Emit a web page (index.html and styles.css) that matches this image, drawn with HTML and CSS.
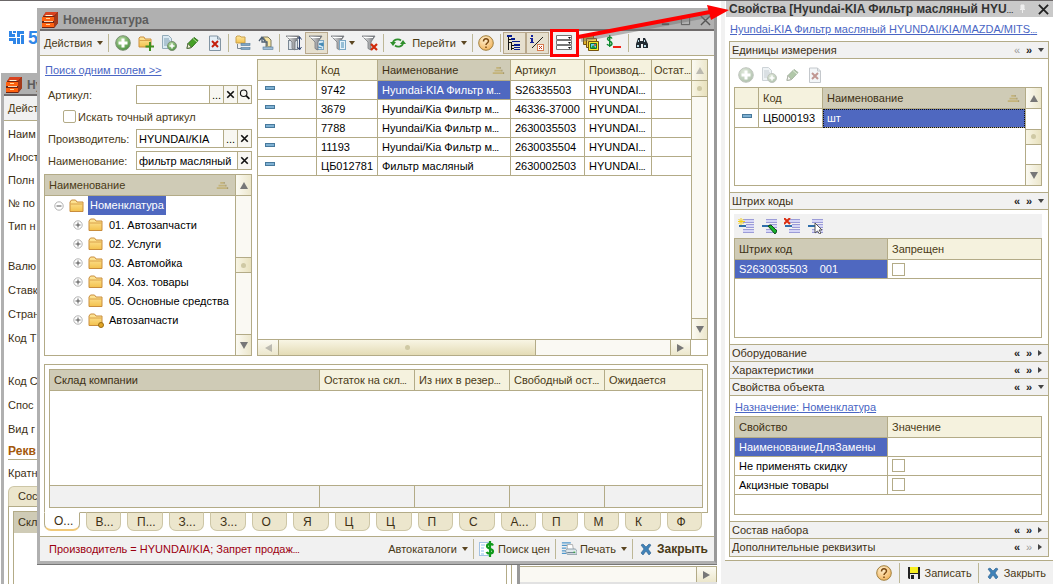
FILE: index.html
```html
<!DOCTYPE html>
<html lang="ru">
<head>
<meta charset="utf-8">
<title>Номенклатура</title>
<link rel="stylesheet" href="styles.css">
</head>
<body>
<svg class="defs" aria-hidden="true">
  <defs>
    <linearGradient id="steel" x1="0" y1="0" x2="1" y2="0"><stop offset="0" stop-color="#f4f4f4"/><stop offset="1" stop-color="#6c6f74"/></linearGradient>
    <linearGradient id="fold" x1="0" y1="0" x2="0" y2="1"><stop offset="0" stop-color="#ffe9a0"/><stop offset="1" stop-color="#f3c14d"/></linearGradient>
    <radialGradient id="green" cx=".4" cy=".3" r=".8"><stop offset="0" stop-color="#b9dba4"/><stop offset="1" stop-color="#3f8a35"/></radialGradient>
    <radialGradient id="amber" cx=".4" cy=".3" r=".8"><stop offset="0" stop-color="#fff0cf"/><stop offset="1" stop-color="#f0ad50"/></radialGradient>
    <symbol id="cabinet" viewBox="0 0 16 16"><path d="M4 0h12v11l-4 5H0V6z" fill="#6d2413"/><path d="M4 0h12l-4 4H1z" fill="#d9431f"/><path d="M12 5l4-5v11l-4 5z" fill="#a33a1b"/><path d="M0 5h12v4H0zM0 11h12v4H0z" fill="#ff6210"/><path d="M4 3h7l-1 1H3z" fill="#fff3d8"/><path d="M2 9h9v1H2z" fill="#f3d6b8"/><path d="M4 6h4v1H4zM4 12h4v1H4z" fill="#ffd9a0"/></symbol>
    <symbol id="plus" viewBox="0 0 16 16"><circle cx="8" cy="8" r="7.3" fill="url(#green)" stroke="#7b8f74"/><path d="M6.500 3.500h3v3h3v3h-3v3h-3v-3h-3v-3h3z" fill="#fff"/></symbol>
    <symbol id="folder" viewBox="0 0 16 16"><path d="M1 13V4l1.500-2h4L8 4h6v9.500H1z" fill="url(#fold)" stroke="#c98d3c"/><path d="M1.500 6h12" stroke="#d9a24a"/></symbol>
    <symbol id="folderplus" viewBox="0 0 16 16"><path d="M1 12V3l1-1h4l1 2h6v8z" fill="url(#fold)" stroke="#c98d3c"/><path d="M1.500 5.500h11" stroke="#d9a24a"/><path d="M12 7v9M7.500 11.500h8.500" stroke="#3f8f1f" stroke-width="2"/></symbol>
    <symbol id="docplus" viewBox="0 0 16 16"><path d="M1.500 .5h6l3 3v10h-9z" fill="#dbeaf3" stroke="#93abb9"/><path d="M3 4h5M3 6h6M3 8h5M3 10h3" stroke="#7f9fb2"/><circle cx="11" cy="11" r="4.500" fill="url(#green)" stroke="#7b8f74"/><path d="M11 8.500v5M8.500 11h5" stroke="#fff" stroke-width="1.500"/></symbol>
    <symbol id="pencil" viewBox="0 0 16 16"><path d="M3 13.500l1-5 6-6 4 3-6.500 7z" fill="#46a126" stroke="#2e6f1a"/><path d="M9 3.500l4 3.500" stroke="#b5dba0"/><path d="M3 13.500l1-5 3.500 4z" fill="#eef3d9" stroke="#5a6d45"/></symbol>
    <symbol id="docdel" viewBox="0 0 16 16"><path d="M2.500 1h8l3 3v11.500h-11z" fill="#e4eff7" stroke="#8294a3"/><path d="M10.500 1v3h3" fill="none" stroke="#8294a3"/><path d="M5 6l6 6M11 6l-6 6" stroke="#c4200d" stroke-width="2"/></symbol>
    <symbol id="move" viewBox="0 0 16 16"><path d="M1 8V2l1-1h3l1 1h4v6z" fill="url(#fold)" stroke="#c9a04c"/><path d="M2.500 9v4.500h4" fill="none" stroke="#7a8790"/><rect x="6" y="8.500" width="9" height="2" fill="#7fa6c6" stroke="#547a98" stroke-width=".6"/><rect x="6" y="12.500" width="9" height="2" fill="#7fa6c6" stroke="#547a98" stroke-width=".6"/></symbol>
    <symbol id="up" viewBox="0 0 16 16"><path d="M5 2h5l3 3v7H8V6z" fill="#f6e3a0" stroke="#7d7a62"/><path d="M1 6l3-4 3 4M4 3v4h5v4" fill="none" stroke="#4e5f71" stroke-width="1.300"/><rect x="5" y="12" width="10" height="2.500" fill="#9fbdd6" stroke="#547a98" stroke-width=".6"/></symbol>
    <symbol id="funnel" viewBox="0 0 16 16"><path d="M0 1h13L9 7v8l-3-1.500V7z" fill="url(#steel)" stroke="#74777b" stroke-width=".8"/><path d="M1.500 2.500h9.500" stroke="#fff"/></symbol>
    <symbol id="funnelsort" viewBox="0 0 16 16"><rect x="2.500" y="5.500" width="9" height="9" fill="#dce4ec" stroke="#7a8794"/><use href="#funnel"/><path d="M13.500 2v12M11.500 4.500l2-3 2 3M11.500 12l2 3 2-3" fill="none" stroke="#34476e"/></symbol>
    <symbol id="funnelcur" viewBox="0 0 16 16"><rect x="7.500" y="5.500" width="7" height="9" fill="#d4e8f5" stroke="#7ba7c4"/><use href="#funnel"/><path d="M10 9l4-1v3zM9 12l4 1" fill="#4489b3" stroke="#4489b3"/></symbol>
    <symbol id="funnellist" viewBox="0 0 16 16"><use href="#funnel"/><rect x="8.500" y="5.500" width="6" height="9" fill="#e7f3fa" stroke="#7ba7c4"/><path d="M10 8h3M10 10h3M10 12h3" stroke="#4489b3"/></symbol>
    <symbol id="funneldel" viewBox="0 0 16 16"><use href="#funnel"/><path d="M9 9l6 6M15 9l-6 6" stroke="#d02a0a" stroke-width="2.200"/></symbol>
    <symbol id="refresh" viewBox="0 0 16 16"><path d="M3 8c0-3 5-5 8-2.500M13 8c0 3-5 5-8 2.500" fill="none" stroke="#2f8f2c" stroke-width="1.800"/><path d="M0 7h6l-3 4zM10 9h6l-3-4z" fill="#2f8f2c"/></symbol>
    <symbol id="help" viewBox="0 0 16 16"><circle cx="8" cy="8" r="7.300" fill="url(#amber)" stroke="#a1803f"/><path d="M5.500 6.500c0-3.500 5-3.500 5-.5 0 2-2.500 2-2.500 4M8 11.500v1.500" fill="none" stroke="#7b4a13" stroke-width="1.500"/></symbol>
    <symbol id="tree" viewBox="0 0 16 16"><path d="M1 0h5v2H1zM5 3h4v2H5zM6 6h8v1H6zM8 9h6v2H8zM8 12h6v1H8zM8 14h6v1H8z" fill="#071d8c"/><path d="M2.500 2v13M3 4.500h2M3 7.500h3M5.500 8v7M6 10.500h2M6 13.500h2" stroke="#111" fill="none"/></symbol>
    <symbol id="ix" viewBox="0 0 16 16"><path d="M2 0h2v2H2zM1 3h3v4h1v1H1V7h1V4H1z" fill="#15239a"/><path d="M3 13L14 2" stroke="#222"/><rect x="8.500" y="9.500" width="6" height="6" fill="#fff" stroke="#d77b50"/><path d="M10 11l3 3M13 11l-3 3" stroke="#c33a14"/></symbol>
    <symbol id="panel" viewBox="0 0 16 16"><path d="M.5.500h15v4H.5zM.5 5.500h15v4H.5zM.5 10.500h15v4H.5z" fill="#fff" stroke="#777"/><path d="M12 2h3l-1.500 2zM12 7h3l-1.500 2zM12 12h3l-1.500 2z" fill="#111"/></symbol>
    <symbol id="pictures" viewBox="0 0 16 16"><path d="M.5.500h10v9H.5z" fill="#e0b129" stroke="#75520e"/><path d="M3.500 3.500h10v9h-10z" fill="#f6d353" stroke="#75520e"/><path d="M5.500 6.500h10v9h-10z" fill="#f4ea28" stroke="#75520e"/><path d="M7.500 8.500h6v5h-6z" fill="#63d3ee" stroke="#176b37"/><path d="M8 13l2-3 3 3z" fill="#239a35"/><circle cx="12" cy="10" r="1" fill="#e1402a"/></symbol>
    <symbol id="dollar" viewBox="0 0 16 16"><path d="M6 3.500C5 1.500 1.500 2 1.500 4s4.500 2 4.500 4.500S2 11 1 9M3.700 0v12" fill="none" stroke="#0a8a2e" stroke-width="1.400"/><path d="M7 11h8v2H7z" fill="#f02318"/></symbol>
    <symbol id="binoc" viewBox="0 0 16 16"><path d="M4 3h2v3h3V3h2l3 6v4H9V9H7v4H2V9z" fill="#222b33"/><path d="M3 10h2v2H3zM10 10h2v2h-2zM4 5h1v2H4zM10 5h1v2h-1z" fill="#b9dce8"/></symbol>
    <symbol id="lens" viewBox="0 0 16 16"><circle cx="7" cy="6.500" r="4" fill="none" stroke="#111" stroke-width="1.400"/><path d="M10 9.500l4 4" stroke="#111" stroke-width="2.200"/></symbol>
    <symbol id="cross" viewBox="0 0 16 16"><path d="M4 4l8 8M12 4l-8 8" stroke="#111" stroke-width="2"/></symbol>
    <symbol id="sort" viewBox="0 0 16 10"><path d="M6 1h4v2H6zM4 4h8v2H4zM2 7h12v2H2z" fill="#c3b37a"/><path d="M10 1h1v2h-1zM12 4h1v2h-1zM14 7h1v2h-1z" fill="#9b8c5d"/></symbol>
    <symbol id="bluex" viewBox="0 0 16 16"><path d="M3 4l2-1 3 3 3-3 2 1-3 4 3 4-2 2-3-4-3 4-2-2 3-4z" fill="#3f82b8" stroke="#2b5e8d" stroke-width=".6"/></symbol>
    <symbol id="price" viewBox="0 0 16 16"><path d="M.5 1.500h11v13H.5z" fill="#fff" stroke="#4f8fd0" stroke-dasharray="1 1"/><path d="M2 4h4M2 7h3M2 10h3M2 13h3" stroke="#8ec1ea"/><path d="M14 4.500c-1-2.500-6-2-6 .8s6 2.200 6 5-5 3.200-6.500.7M11 0v16" fill="none" stroke="#109a1a" stroke-width="2.200"/></symbol>
    <symbol id="print" viewBox="0 0 18 16"><path d="M1 1h10M1 4h8M1 7h5M1 10h5M1 13h5" stroke="#4f97cc" stroke-width="1.400"/><path d="M7 3h6l1 6H7z" fill="#fff" stroke="#aaa"/><path d="M5 10l2-2h9l2 2v4H7z" fill="#dfe7ec" stroke="#8496a3"/><path d="M7 12h9" stroke="#5e7484"/><path d="M14 11h2v1h-2z" fill="#1bb51b"/></symbol>
    <symbol id="disk" viewBox="0 0 16 16"><path d="M2 2h12v12H3l-1-1z" fill="#222"/><path d="M4 2h8v6H4z" fill="#f8ef21"/><path d="M4 9h8v5H4z" fill="#eee"/><path d="M5 10h3v4H5z" fill="#222"/></symbol>
    <symbol id="lines" viewBox="0 0 16 16"><path d="M5 1h11v4H5zM8 6h8v4H8zM5 11h11v4H5z" fill="#9c9cd8"/><path d="M5 3h11M8 8h8M5 13h11" stroke="#e9e9ff" stroke-width="1.500"/><path d="M1 8h7" stroke="#2f6eaa" stroke-width="2"/></symbol>
    <symbol id="lnew" viewBox="0 0 16 16"><use href="#lines"/><path d="M3 0v7M0 3.500h7M.5 1l5 5M5.500 1l-5 5" stroke="#f2cf1d"/></symbol>
    <symbol id="ledit" viewBox="0 0 16 16"><use href="#lines"/><path d="M7 8l3-1 6 6-2 3z" fill="#16b32c" stroke="#114d14"/></symbol>
    <symbol id="ldel" viewBox="0 0 16 16"><use href="#lines"/><path d="M0 0l6 6M6 0L0 6" stroke="#db2d10" stroke-width="2"/></symbol>
    <symbol id="lpick" viewBox="0 0 16 16"><use href="#lines"/><path d="M8 5v10l2.500-2 2 3 1.500-1-2-3h3z" fill="#fff" stroke="#555"/></symbol>
    <symbol id="node" viewBox="0 0 10 10"><circle cx="5" cy="5" r="4.200" fill="#fff" stroke="#b3b3b3"/><path d="M2.500 5h5" stroke="#555"/></symbol>
    <symbol id="nodeplus" viewBox="0 0 10 10"><use href="#node"/><path d="M5 2.500v5" stroke="#555"/></symbol>
  </defs>
</svg>

<div class="screen">
  <main class="desktop">
    <svg class="logo" viewBox="0 0 15 13"><path d="M0 0h3v3h3v3H0zM4 0h3v2H4zM8 0h7v3h-4v3H8zM0 7h7v3H0zM4 10h3v3H4zM8 7h3v6H8zM12 4h3v9h-3z" fill="#2f86e8"/></svg>
    <span class="logo-text">5</span>

    <section class="back-right">
      <div class="hbar"><span class="track"></span><button class="sb right" aria-label="Вправо"></button></div>
    </section>
    <section class="win back">
      <header class="titlebar"><svg class="i"><use href="#cabinet"/></svg><h2>Hy</h2></header>
      <div class="toolbar"><button class="tb text">Дейст</button></div>
      <div class="back-body">
        <ul class="labels first"><li>Наим</li><li>Иност</li><li>Полн</li><li>№ по</li><li>Тип н</li></ul>
        <ul class="labels"><li>Валю</li><li>Ставк</li><li>Стран</li><li>Код Т</li></ul>
        <ul class="labels"><li>Код С</li><li>Спос</li><li>Вид г</li></ul>
        <h3>Рекв</h3>
        <p class="ratio">Кратн</p>
        <span class="back-tab">Сос</span>
        <div class="back-page"><div class="back-grid"><b>Скл</b></div></div>
      </div>
    </section>

    <section class="win front">
      <header class="titlebar"><svg class="i"><use href="#cabinet"/></svg><h1>Номенклатура</h1>
        <div class="winbtns"><button aria-label="Свернуть"><svg viewBox="0 0 12 12"><path d="M2 10h8" stroke="#444" stroke-width="2"/></svg></button><button aria-label="Развернуть"><svg viewBox="0 0 12 12"><path d="M1.500 1.500h9v9h-9z" fill="none" stroke="#555"/></svg></button><button aria-label="Закрыть окно"><svg viewBox="0 0 12 12"><path d="M1 1l10 10M11 1L1 11" stroke="#555" stroke-width="1.500"/></svg></button></div>
      </header>
      <div class="toolbar">
        <button class="tb text">Действия<i class="dd"></i></button><i class="sep"></i>
        <button class="tb" aria-label="Добавить"><svg class="i"><use href="#plus"/></svg></button>
        <button class="tb" aria-label="Новая группа"><svg class="i"><use href="#folderplus"/></svg></button>
        <button class="tb" aria-label="Скопировать"><svg class="i"><use href="#docplus"/></svg></button>
        <button class="tb" aria-label="Изменить"><svg class="i"><use href="#pencil"/></svg></button>
        <button class="tb" aria-label="Удалить"><svg class="i"><use href="#docdel"/></svg></button><i class="sep"></i>
        <button class="tb" aria-label="Переместить в группу"><svg class="i"><use href="#move"/></svg></button>
        <button class="tb" aria-label="На уровень вверх"><svg class="i"><use href="#up"/></svg></button><i class="sep"></i>
        <button class="tb" aria-label="Отбор и сортировка"><svg class="i"><use href="#funnelsort"/></svg></button>
        <button class="tb on" aria-label="Отбор по значению"><svg class="i"><use href="#funnelcur"/></svg></button>
        <button class="tb wide" aria-label="История отборов"><svg class="i"><use href="#funnellist"/></svg><i class="dd"></i></button>
        <button class="tb" aria-label="Отключить отбор"><svg class="i"><use href="#funneldel"/></svg></button><i class="sep"></i>
        <button class="tb" aria-label="Обновить"><svg class="i"><use href="#refresh"/></svg></button>
        <button class="tb text">Перейти<i class="dd"></i></button><i class="sep"></i>
        <button class="tb" aria-label="Справка"><svg class="i"><use href="#help"/></svg></button><i class="sep"></i>
        <button class="tb on" aria-label="Иерархия"><svg class="i"><use href="#tree"/></svg></button>
        <button class="tb on" aria-label="Остатки"><svg class="i"><use href="#ix"/></svg></button>
        <button class="tb marked" aria-label="Свойства"><svg class="i"><use href="#panel"/></svg>
          <svg class="arrow" viewBox="0 0 150 50"><path d="M3 33L134 8" stroke="#777" stroke-width="4" opacity=".5"/><path d="M0 30L132 5" stroke="#f00" stroke-width="4"/><path d="M129 -2L151 3L133 13z" fill="#f00"/></svg>
        </button>
        <button class="tb" aria-label="Изображения"><svg class="i"><use href="#pictures"/></svg></button>
        <button class="tb" aria-label="Цены"><svg class="i"><use href="#dollar"/></svg></button><i class="sep"></i>
        <button class="tb" aria-label="Найти"><svg class="i"><use href="#binoc"/></svg></button>
      </div>

      <div class="content">
        <div class="upper">
          <div class="search">
            <a class="link" href="#">Поиск одним полем &gt;&gt;</a>
            <div class="field"><label for="art">Артикул:</label><span class="box"><input id="art" type="text"><button aria-label="Выбрать артикул">...</button><button aria-label="Очистить артикул"><svg><use href="#cross"/></svg></button><button aria-label="Найти артикул"><svg><use href="#lens"/></svg></button></span></div>
            <label class="exact"><input type="checkbox">Искать точный артикул</label>
            <div class="field"><label for="man">Производитель:</label><span class="box"><input id="man" type="text" value="HYUNDAI/KIA"><button aria-label="Выбрать производителя">...</button><button aria-label="Очистить производителя"><svg><use href="#cross"/></svg></button></span></div>
            <div class="field"><label for="nam">Наименование:</label><span class="box"><input id="nam" type="text" value="фильтр масляный"><button aria-label="Очистить наименование"><svg><use href="#cross"/></svg></button></span></div>
            <div class="frame tree">
              <div class="pane">
                <div class="tree-head">Наименование<svg class="sort"><use href="#sort"/></svg></div>
                <ul>
                  <li class="root"><svg class="n"><use href="#node"/></svg><svg class="i"><use href="#folder"/></svg><span class="sel">Номенклатура</span></li>
                  <li><svg class="n"><use href="#nodeplus"/></svg><svg class="i"><use href="#folder"/></svg><span>01. Автозапчасти</span></li>
                  <li><svg class="n"><use href="#nodeplus"/></svg><svg class="i"><use href="#folder"/></svg><span>02. Услуги</span></li>
                  <li><svg class="n"><use href="#nodeplus"/></svg><svg class="i"><use href="#folder"/></svg><span>03. Автомойка</span></li>
                  <li><svg class="n"><use href="#nodeplus"/></svg><svg class="i"><use href="#folder"/></svg><span>04. Хоз. товары</span></li>
                  <li><svg class="n"><use href="#nodeplus"/></svg><svg class="i"><use href="#folder"/></svg><span>05. Основные средства</span></li>
                  <li><svg class="n"><use href="#nodeplus"/></svg><svg class="i" viewBox="0 0 16 16"><use href="#folder"/><circle cx="13" cy="13" r="2.500" fill="#e0a526" stroke="#9b6d12"/></svg><span>Автозапчасти</span></li>
                </ul>
              </div>
              <div class="vbar"><button class="sb up" aria-label="Вверх"></button><span class="track"></span><span class="thumb"></span><span class="track"></span><button class="sb down" aria-label="Вниз"></button></div>
            </div>
          </div>

          <div class="frame list">
            <div class="list-main">
              <div class="pane">
                <table>
                  <colgroup><col class="c59"><col class="c61"><col><col class="c74"><col class="c67"><col class="c39"></colgroup>
                  <thead><tr><th></th><th>Код</th><th class="dark"><span class="hs">Наименование<svg class="sort"><use href="#sort"/></svg></span></th><th>Артикул</th><th>Производ<small>…</small></th><th>Остат<small>…</small></th></tr></thead>
                  <tbody>
                    <tr><td><i class="dash"></i></td><td>9742</td><td class="sel">Hyundai-KIA Фильтр м<small>…</small></td><td>S26335503</td><td>HYUNDAI<small>…</small></td><td></td></tr>
                    <tr><td><i class="dash"></i></td><td>3679</td><td>Hyundai/Kia Фильтр м<small>…</small></td><td>46336-37000</td><td>HYUNDAI<small>…</small></td><td></td></tr>
                    <tr><td><i class="dash"></i></td><td>7788</td><td>Hyundai/Kia Фильтр м<small>…</small></td><td>2630035503</td><td>HYUNDAI<small>…</small></td><td></td></tr>
                    <tr><td><i class="dash"></i></td><td>11193</td><td>Hyundai/Kia Фильтр м<small>…</small></td><td>2630035504</td><td>HYUNDAI<small>…</small></td><td></td></tr>
                    <tr><td><i class="dash"></i></td><td>ЦБ012781</td><td>Фильтр масляный</td><td>2630002503</td><td>HYUNDAI<small>…</small></td><td></td></tr>
                  </tbody>
                </table>
              </div>
              <div class="vbar"><button class="sb up dim" aria-label="Вверх"></button><span class="thumb"></span><span class="track"></span><button class="sb down" aria-label="Вниз"></button></div>
            </div>
            <div class="hbar"><button class="sb left dim" aria-label="Влево"></button><span class="thumb"></span><span class="track"></span><button class="sb right" aria-label="Вправо"></button><span class="corner"></span></div>
          </div>
        </div>

        <div class="stock">
          <table class="stock-table">
            <colgroup><col><col class="c95"><col class="c95"><col class="c95"><col class="c97"></colgroup>
            <thead><tr><th class="dark">Склад компании</th><th>Остаток на скл<small>…</small></th><th>Из них в резер<small>…</small></th><th>Свободный ост<small>…</small></th><th>Ожидается</th></tr></thead>
            <tbody><tr><td colspan="5"></td></tr></tbody>
            <tfoot><tr><td></td><td></td><td></td><td></td><td></td></tr></tfoot>
          </table>
        </div>
        <nav class="tabs">
          <button class="active">О...</button><button>В...</button><button>П...</button><button>З...</button><button>З...</button><button>О</button><button>Я</button><button>Ц</button><button>Ц</button><button>П</button><button>С</button><button>А...</button><button>П</button><button>М</button><button>К</button><button>Ф</button>
        </nav>
      </div>

      <footer class="foot">
        <span class="filter">Производитель = HYUNDAI/KIA; Запрет продаж<small>…</small></span>
        <button class="tb text">Автокаталоги<i class="dd"></i></button><i class="sep"></i>
        <button class="tb text"><svg class="i"><use href="#price"/></svg>Поиск цен</button><i class="sep"></i>
        <button class="tb text"><svg class="i"><use href="#print"/></svg>Печать<i class="dd"></i></button><i class="sep"></i>
        <button class="tb text strong"><svg class="i"><use href="#bluex"/></svg>Закрыть</button>
      </footer>
    </section>
  </main>

  <aside class="props">
    <header class="props-title"><h2>Свойства [Hyundai-KIA Фильтр масляный HYU<small>…</small></h2><svg class="pin" viewBox="0 0 8 10"><path d="M3 1h3v4H3zM2 5.500h5M4.500 6v3" fill="#eee" stroke="#eee"/></svg><button aria-label="Закрыть панель"><svg viewBox="0 0 12 12"><path d="M1 1l10 10M11 1L1 11" stroke="#222" stroke-width="2"/></svg></button></header>
    <a class="link item" href="#">Hyundai-KIA Фильтр масляный HYUNDAI/KIA/MAZDA/MITS<small>…</small></a>
    <div class="stack">
      <h3 class="bar"><span>Единицы измерения</span><b class="dim">«</b><b>»</b><i class="dd"></i></h3>
      <div class="body">
        <div class="mini faded">
          <button class="tb" aria-label="Добавить единицу"><svg class="i"><use href="#plus"/></svg></button><button class="tb" aria-label="Скопировать единицу"><svg class="i"><use href="#docplus"/></svg></button><button class="tb" aria-label="Изменить единицу"><svg class="i"><use href="#pencil"/></svg></button><button class="tb" aria-label="Удалить единицу"><svg class="i"><use href="#docdel"/></svg></button>
        </div>
        <div class="frame units">
          <div class="pane">
            <table><colgroup><col class="c24"><col class="c64"><col></colgroup>
              <thead><tr><th></th><th>Код</th><th class="dark"><span class="hs">Наименование<svg class="sort"><use href="#sort"/></svg></span></th></tr></thead>
              <tbody><tr><td><i class="dash"></i></td><td>ЦБ000193</td><td class="sel focus">шт</td></tr></tbody></table>
          </div>
          <div class="vbar"><button class="sb up" aria-label="Вверх"></button><span class="track"></span><span class="thumb"></span><span class="track"></span><button class="sb down" aria-label="Вниз"></button></div>
        </div>
      </div>
      <h3 class="bar"><span>Штрих коды</span><b>«</b><b>»</b><i class="dd"></i></h3>
      <div class="body">
        <div class="mini shade">
          <button class="tb" aria-label="Добавить код"><svg class="i"><use href="#lnew"/></svg></button><button class="tb" aria-label="Изменить код"><svg class="i"><use href="#ledit"/></svg></button><button class="tb" aria-label="Удалить код"><svg class="i"><use href="#ldel"/></svg></button><button class="tb" aria-label="Выбрать код"><svg class="i"><use href="#lpick"/></svg></button>
        </div>
        <div class="frame">
          <table><colgroup><col><col></colgroup>
            <thead><tr><th class="dark">Штрих код</th><th>Запрещен</th></tr></thead>
            <tbody><tr><td class="sel">S2630035503 &nbsp; &nbsp;001</td><td><input type="checkbox" aria-label="Запрещен"></td></tr></tbody></table>
        </div>
      </div>
      <h3 class="bar"><span>Оборудование</span><b>«</b><b>»</b><i class="rr"></i></h3>
      <h3 class="bar"><span>Характеристики</span><b>«</b><b>»</b><i class="rr"></i></h3>
      <h3 class="bar"><span>Свойства объекта</span><b>«</b><b>»</b><i class="dd"></i></h3>
      <div class="body object">
        <a class="link" href="#">Назначение: Номенклатура</a>
        <div class="frame">
          <table><colgroup><col><col></colgroup>
            <thead><tr><th class="dark">Свойство</th><th>Значение</th></tr></thead>
            <tbody><tr><td class="sel">НаименованиеДляЗамены</td><td></td></tr>
              <tr><td>Не применять скидку</td><td><input type="checkbox" aria-label="Не применять скидку"></td></tr>
              <tr><td>Акцизные товары</td><td><input type="checkbox" aria-label="Акцизные товары"></td></tr></tbody></table>
        </div>
      </div>
      <h3 class="bar"><span>Состав набора</span><b>«</b><b>»</b><i class="rr"></i></h3>
      <h3 class="bar"><span>Дополнительные реквизиты</span><b>«</b><b class="dim">»</b><i class="rr"></i></h3>
    </div>
    <footer class="foot">
      <button class="tb" aria-label="Справка"><svg class="i"><use href="#help"/></svg></button><i class="sep"></i>
      <button class="tb text"><svg class="i"><use href="#disk"/></svg>Записать</button><i class="sep"></i>
      <button class="tb text"><svg class="i"><use href="#bluex"/></svg>Закрыть</button>
    </footer>
  </aside>
</div>
</body>
</html>
```
FILE: styles.css
```css
* { box-sizing: border-box; }
body { margin: 0; background: #fff; color: #4a3a16; font: 11px/14px "Liberation Sans", Arial, sans-serif; }
h1, h2, h3, p, ul { margin: 0; padding: 0; font-size: 11px; font-weight: normal; list-style: none; }
button, input { font: inherit; color: inherit; margin: 0; padding: 0; }
button { border: 0; background: none; display: flex; align-items: center; justify-content: center; flex: none; }
small { font-size: 7px; line-height: 7px; font-weight: bold; }
svg { display: block; flex: none; }
.defs { position: absolute; width: 0; height: 0; }
.i { width: 16px; height: 16px; }
.link { color: #4a66c4; text-decoration: underline; white-space: nowrap; }

.screen { display: flex; min-height: 100vh; border-top: 1px solid #6b6768; }
.desktop { flex: 1; position: relative; min-width: 0; z-index: 1; }
.logo { position: absolute; left: 9px; top: 30px; width: 15px; height: 13px; }
.logo-text { position: absolute; left: 28px; top: 27px; font: bold 18px/20px "Liberation Sans", Arial, sans-serif; color: #2f86e8; }

/* windows on the desktop */
.win { position: absolute; display: flex; flex-direction: column; border: 3px solid #b0b0b0; border-right-color: #999; background: #fff; }
.front { left: 37px; top: 7px; right: 9px; bottom: 20px; box-shadow: 0 1px 0 #777; }
.back { left: 1px; top: 72px; right: 206px; bottom: 0; border-bottom: 0; overflow: hidden; }
.back-right { position: absolute; left: 520px; right: 9px; bottom: 0; height: 18px; border-bottom: 2px solid #e2e2e2; }
.titlebar { display: flex; align-items: center; gap: 5px; height: 20px; padding-left: 2px; background: #b0b0b0; border-bottom: 2px solid #6f6b6b; flex: none; }
.titlebar h1, .titlebar h2 { flex: 1; font-size: 12px; font-weight: bold; color: #5c5c5c; }
.winbtns { display: flex; gap: 9px; padding-right: 3px; }
.winbtns svg, .props-title button svg { width: 11px; height: 11px; }
.toolbar { display: flex; align-items: center; flex: none; height: 25px; background: #f1f1f1; border-bottom: 1px solid #b3ab87; padding-left: 1px; }

.tb { width: 23px; height: 22px; border: 1px solid transparent; position: relative; }
.tb.text { width: auto; padding: 0 2px; gap: 3px; white-space: nowrap; }
.tb.wide { width: 30px; gap: 2px; }
.tb.on { background: #e6e0cf; border-color: #b9a98d; }
.tb.strong { font-weight: bold; font-size: 12px; }
.tb.marked { width: 29px; height: 28px; margin: 0 1px 0 1px; border: 3px solid #f00; background: #f1f1f1; }
.arrow { position: absolute; left: 25px; top: -25px; width: 150px; height: 50px; z-index: 5; pointer-events: none; overflow: visible; }
.sep { width: 1px; height: 18px; margin: 0 2px; background: #bdb796; flex: none; }
.dd { border: 3px solid transparent; border-top: 4px solid #5b4622; border-bottom: 0; margin-left: 2px; flex: none; }
.wide .dd { margin: 0; }

/* window behind */
.back-body { padding: 2px 0 0 4px; color: #3d3014; white-space: nowrap; flex: 1; display: flex; flex-direction: column; }
.labels { margin-bottom: 19px; }
.labels.first { margin-bottom: 16px; }
.labels li { line-height: 24px; }
.labels.first li { line-height: 23px; }
.labels:nth-of-type(3) { margin-bottom: 2px; }
.back-body h3 { font-size: 12px; line-height: 16px; font-weight: bold; color: #a3580c; border-bottom: 1px solid #b3ab87; }
.ratio { line-height: 26px; }
.back-tab { width: 60px; line-height: 19px; padding-left: 9px; background: #ece6cd; border: 1px solid #cdc6a6; border-bottom: 0; border-radius: 6px 6px 0 0; }
.back-page { flex: 1; border: 1px solid #b3ab87; border-bottom: 0; padding: 4px 4px 0; margin-right: 5px; }
.back-grid { height: 100%; border: 1px solid #b3ab87; border-bottom: 0; }
.back-grid b { display: block; font-weight: normal; padding-left: 4px; line-height: 21px; background: #cfcbb6; }

/* main content */
.content { flex: 1; min-height: 0; display: flex; flex-direction: column; padding: 3px 6px 5px 4px; }
.upper { display: grid; grid-template-columns: 208px minmax(0, 1fr); gap: 5px; flex: 2 0 auto; min-height: 295px; }
.search { display: flex; flex-direction: column; }
.search > .link { margin: 4px 0 7px 1px; height: 15px; align-self: flex-start; }
.field { display: flex; align-items: center; height: 19px; margin-bottom: 3px; }
.field label { width: 92px; padding-left: 4px; flex: none; }
.box { display: flex; flex: 1; height: 19px; border: 1px solid #b3ab87; background: #fff; }
.box input { flex: 1; min-width: 0; width: 0; border: 0; padding-left: 2px; background: #fff; color: #000; outline: 0; }
.box button { width: 14px; border-left: 1px solid #b3ab87; background: #f8f7f2; color: #000; }
.box button svg { width: 13px; height: 13px; }
.exact { display: flex; align-items: center; gap: 2px; height: 19px; margin: 0 0 3px 19px; }
input[type=checkbox] { appearance: none; width: 13px; height: 13px; border: 1px solid #b3ab87; background: #fff; display: block; }
.exact input { border-radius: 2px; }

.frame { display: flex; border: 1px solid #b3ab87; background: #fff; min-height: 0; }
.pane { flex: 1; min-width: 0; }
.tree { flex: 1; margin-top: 1px; }
.tree-head { display: flex; align-items: center; justify-content: space-between; height: 21px; padding: 0 6px 0 4px; background: #cfcbb6; border-bottom: 1px solid #b3ab87; }
.sort { width: 14px; height: 9px; }
.tree li { display: flex; align-items: center; height: 19px; padding-left: 28px; color: #000; white-space: nowrap; }
.tree .root { padding-left: 9px; }
.tree .n { width: 10px; height: 10px; margin-right: 5px; }
.tree .i { margin-right: 3px; }
.tree li span { padding: 0 2px; line-height: 18px; }
.tree li span.sel { background: #4f68c0; color: #fff; line-height: 19px; }

.list { flex-direction: column; }
.list-main { display: flex; flex: 1; }
table { width: 100%; table-layout: fixed; border-collapse: separate; border-spacing: 0; }
th, td { padding: 0 0 0 4px; border-right: 1px solid #b3ab87; border-bottom: 1px solid #b3ab87; text-align: left; font-weight: normal; white-space: nowrap; overflow: hidden; }
th { height: 21px; background: #f5f2de; }
td { height: 19px; color: #000; }
tr > :last-child { border-right: 0; }
.list th:last-child { padding-left: 2px; }
.dark { background: #cfcbb6; color: #3d3014; }
td.sel { background: #4f68c0; color: #fff; }
td.focus { outline: 1px dotted #111; outline-offset: -1px; }
.hs { display: flex; align-items: center; justify-content: space-between; padding-right: 5px; }
.dash { display: block; width: 10px; height: 4px; margin: -4px 0 0 3px; background: #7fb1d3; border: 1px solid #48799c; }
.c24 { width: 24px; } .c39 { width: 39px; } .c59 { width: 59px; } .c61 { width: 61px; } .c64 { width: 64px; }
.c67 { width: 67px; } .c74 { width: 74px; } .c95 { width: 95px; } .c97 { width: 97px; }

/* scroll bars */
.vbar { width: 16px; display: flex; flex-direction: column; border-left: 1px solid #b3ab87; flex: none; }
.hbar { height: 16px; display: flex; border-top: 1px solid #b3ab87; flex: none; }
.sb { background: linear-gradient(90deg, #fbfaf2, #ece7cc); }
.vbar .sb { height: 21px; border-bottom: 1px solid #b3ab87; }
.vbar .down { border-bottom: 0; border-top: 1px solid #b3ab87; }
.hbar .sb { width: 21px; border-right: 1px solid #b3ab87; background: linear-gradient(#fbfaf2, #ece7cc); }
.hbar .right { border-left: 1px solid #b3ab87; }
.sb::before { content: ""; border: 4px solid transparent; }
.up::before { border-top: 0; border-bottom: 7px solid #777; }
.down::before { border-bottom: 0; border-top: 7px solid #777; }
.left::before { border-left: 0; border-right: 7px solid #777; }
.right::before { border-right: 0; border-left: 7px solid #777; }
.dim::before { opacity: .45; }
.track { flex: 1; background: #faf9f3; }
.thumb { display: flex; align-items: center; justify-content: center; height: 16px; background: linear-gradient(90deg, #f8f5e4, #e8e1bd); border: 1px solid #b3ab87; border-width: 1px 0; flex: none; }
.thumb::before { content: ""; width: 5px; height: 5px; border-radius: 50%; background: #cfc9a4; }
.hbar .thumb { flex: 65 1 0; height: auto; background: linear-gradient(#f8f5e4, #e4dcb6); border-width: 0 1px 0 0; }
.hbar .track { flex: 34 1 0; }
.list .vbar .thumb { border-top: 0; }
.units .vbar .track { background: #fff; }
.corner { width: 16px; }

.stock { flex: 1 0 auto; min-height: 149px; margin-top: 8px; border: 1px solid #b3ab87; padding: 4px; display: flex; }
.stock-table { height: auto; border: 1px solid #b3ab87; }
.stock-table tfoot td { height: 21px; background: #f1f1f1; border-bottom: 0; }
.tabs { display: flex; gap: 6px; padding-right: 6px; margin-top: -1px; }
.tabs button { flex: 1 1 0; height: 19px; padding-left: 9px; justify-content: flex-start; background: #ece6cd; border: 1px solid #cdc6a6; border-top-color: #b3ab87; border-radius: 0 0 7px 7px; color: #3d3014; font-size: 12px; }
.tabs .active { background: #fff; border-color: #fff #b3ab87 #f0c97a; border-bottom-width: 2px; }

.foot { display: flex; align-items: center; flex: none; height: 25px; padding-right: 3px; background: #f1f1f1; border-top: 1px solid #b3ab87; }
.filter { flex: 1; padding-left: 9px; color: #9c0010; white-space: nowrap; overflow: hidden; }
.foot .sep { margin: 0 2px; height: 20px; }

/* properties panel */
.props { width: 327px; flex: none; display: flex; flex-direction: column; position: relative; }
.props::before { content: ""; position: absolute; left: -5px; top: 0; bottom: 0; width: 4px; background: #f1f1f1; }
.props-title { display: flex; align-items: center; height: 16px; padding: 0 4px 0 3px; background: #c9c9c9; flex: none; }
.props-title h2 { flex: 1; font-size: 12px; font-weight: bold; color: #333; white-space: nowrap; overflow: hidden; }
.pin { width: 8px; height: 10px; margin-right: 12px; }
.item { margin: 5px 8px 5px 4px; overflow: hidden; height: 14px; flex: none; }
.stack { margin: 0 4px 3px 3px; border: 1px solid #b3ab87; flex: 1 0 auto; display: flex; flex-direction: column; }
.bar { display: flex; align-items: center; height: 17px; flex: none; padding: 0 4px 0 2px; background: #f1f1f1; border-bottom: 1px solid #b3ab87; color: #3d3014; }
.bar span { flex: 1; }
.bar b { width: 12px; font-size: 11px; line-height: 12px; color: #222; }
.bar b.dim { color: #999; font-weight: normal; }
.bar .dd { margin: 0; border-top-color: #444; }
.rr { border: 3px solid transparent; border-left: 4px solid #444; border-right: 0; margin: 0 2px 0 0; }
.bar:last-child { border-bottom: 0; }
.body { flex: 1 0 auto; display: flex; flex-direction: column; padding: 4px 6px 6px 4px; border-bottom: 1px solid #b3ab87; }
.mini { display: flex; align-items: center; height: 24px; flex: none; }
.faded { opacity: .5; filter: grayscale(.5); }
.shade { background: #f1f1f1; }
.body .frame { flex: 1 0 auto; min-height: 98px; align-items: flex-start; }
.body .vbar { align-self: stretch; }
.object > .link { height: 16px; margin: 0 0 0 1px; align-self: flex-start; }
.props .foot { height: 24px; margin-left: -1px; justify-content: flex-end; padding-right: 4px; }
.props .sep { margin: 0 3px; }
```
